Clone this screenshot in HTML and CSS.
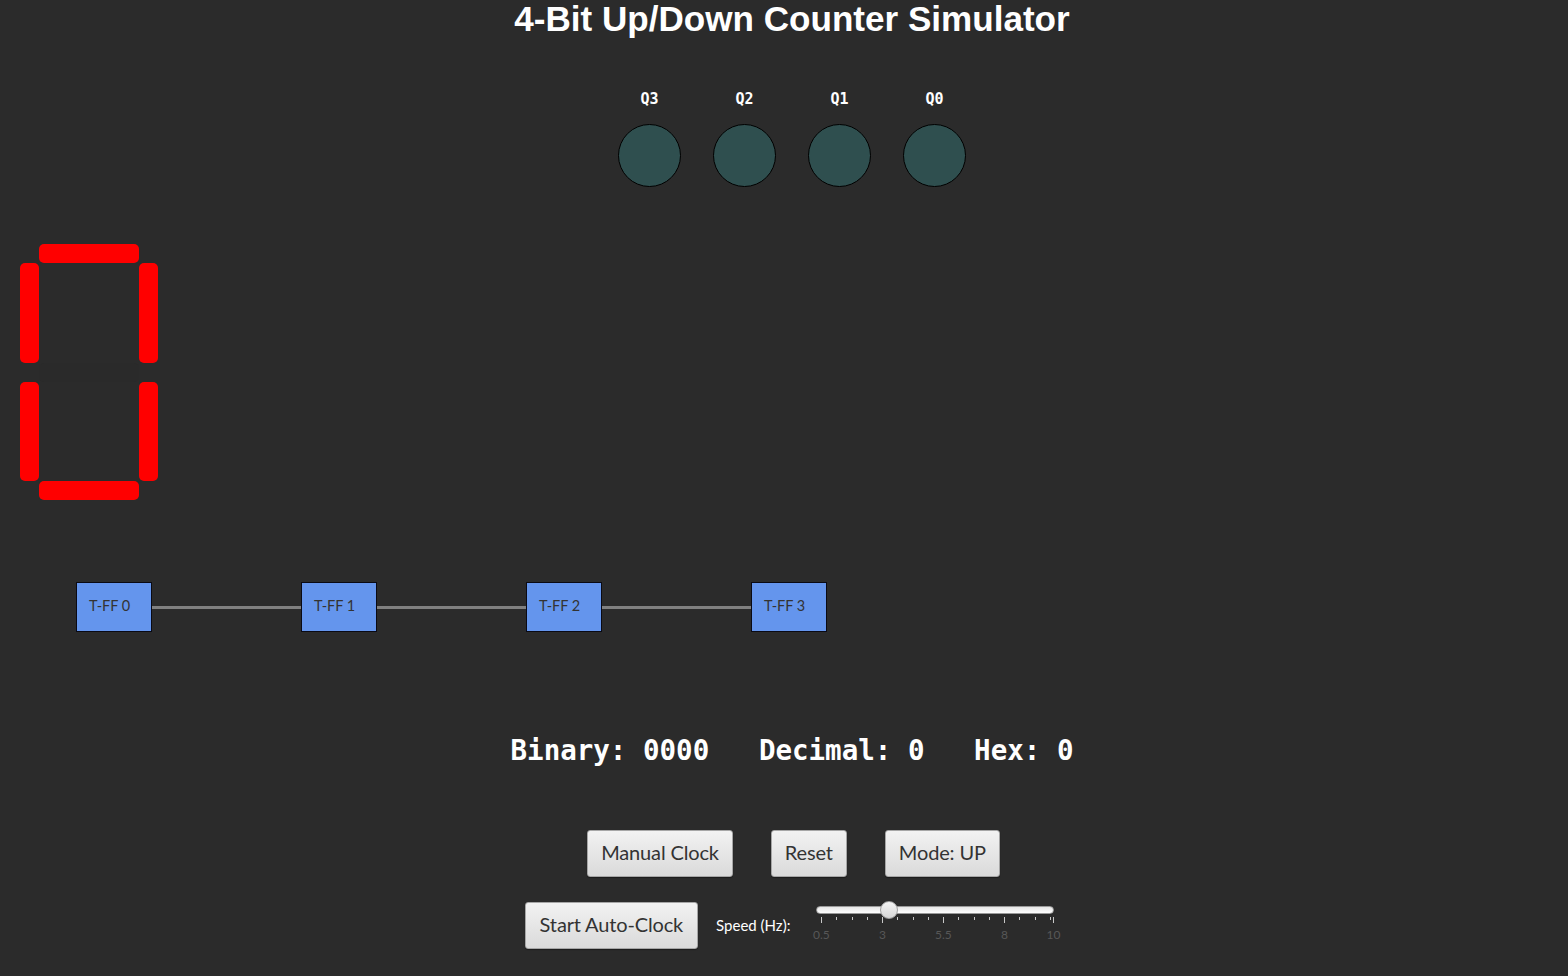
FILE: index.html
```html
<!DOCTYPE html>
<html lang="en">
<head>
<meta charset="utf-8">
<title>4-Bit Up/Down Counter Simulator</title>
<link rel="stylesheet" href="styles.css">
</head>
<body>
<div class="app">
  <h1 class="title center">4-Bit Up/Down Counter Simulator</h1>

  <div class="leds center">
    <div class="led"><span class="led-label">Q3</span><span class="led-bulb"></span></div>
    <div class="led"><span class="led-label">Q2</span><span class="led-bulb"></span></div>
    <div class="led"><span class="led-label">Q1</span><span class="led-bulb"></span></div>
    <div class="led"><span class="led-label">Q0</span><span class="led-bulb"></span></div>
  </div>

  <div class="seg7">
    <span class="seg seg-a on"></span>
    <span class="seg seg-f on"></span>
    <span class="seg seg-b on"></span>
    <span class="seg seg-g"></span>
    <span class="seg seg-e on"></span>
    <span class="seg seg-c on"></span>
    <span class="seg seg-d on"></span>
  </div>

  <div class="chain">
    <div class="tff">T-FF 0</div>
    <div class="wire"></div>
    <div class="tff">T-FF 1</div>
    <div class="wire"></div>
    <div class="tff">T-FF 2</div>
    <div class="wire"></div>
    <div class="tff">T-FF 3</div>
  </div>

  <div class="readout center">Binary: 0000   Decimal: 0   Hex: 0</div>

  <div class="controls center">
    <button class="btn">Manual Clock</button>
    <button class="btn">Reset</button>
    <button class="btn">Mode: UP</button>
  </div>

  <div class="controls2 center">
    <button class="btn btn-wide">Start Auto-Clock</button>
    <span class="speed-label">Speed (Hz):</span>
    <div class="slider">
      <div class="slider-track"><span class="slider-thumb"></span></div>
      <div class="slider-ticks">
        <span class="tick major" style="left:0px"></span>
        <span class="tick" style="left:15px"></span>
        <span class="tick" style="left:31px"></span>
        <span class="tick" style="left:46px"></span>
        <span class="tick major" style="left:61px"></span>
        <span class="tick" style="left:76px"></span>
        <span class="tick" style="left:92px"></span>
        <span class="tick" style="left:107px"></span>
        <span class="tick major" style="left:122px"></span>
        <span class="tick" style="left:137px"></span>
        <span class="tick" style="left:153px"></span>
        <span class="tick" style="left:168px"></span>
        <span class="tick major" style="left:183px"></span>
        <span class="tick" style="left:198px"></span>
        <span class="tick" style="left:214px"></span>
        <span class="tick" style="left:229px"></span>
        <span class="tick major" style="left:232px"></span>
      </div>
      <div class="slider-labels">
        <span class="tick-label" style="left:0px">0.5</span>
        <span class="tick-label" style="left:61px">3</span>
        <span class="tick-label" style="left:122px">5.5</span>
        <span class="tick-label" style="left:183px">8</span>
        <span class="tick-label" style="left:232px">10</span>
      </div>
    </div>
  </div>
</div>
</body>
</html>
```

FILE: styles.css
```css
* {
  box-sizing: border-box;
}

html, body {
  margin: 0;
  padding: 0;
  background: #2b2b2b;
}

body {
  width: 1568px;
  height: 976px;
  overflow: hidden;
  font-family: "Lato", "Open Sans", sans-serif;
}

.app {
  display: flex;
  flex-direction: column;
}

.center {
  padding-left: 16px;
  display: flex;
  justify-content: center;
}

.title {
  margin: 0;
  font-family: "Liberation Sans", Arial, sans-serif;
  font-weight: bold;
  font-size: 35.1px;
  line-height: 38px;
  color: #ffffff;
}

/* LEDs */
.leds {
  margin-top: 52px;
  gap: 32px;
}

.led {
  display: flex;
  flex-direction: column;
  align-items: center;
  width: 63px;
}

.led-label {
  font-family: "DejaVu Sans Mono", monospace;
  font-weight: bold;
  font-size: 15px;
  line-height: 18px;
  color: #ffffff;
}

.led-bulb {
  margin-top: 16px;
  width: 63px;
  height: 63px;
  border-radius: 50%;
  background: #2f4f4f;
  border: 1px solid #000000;
}

/* Seven segment */
.seg7 {
  margin-top: 57px;
  margin-left: 20px;
  display: grid;
  grid-template-columns: 19px 100px 19px;
  grid-template-rows: 19px 100px 19px 99px 19px;
  width: 138px;
}

.seg {
  border-radius: 5px;
  background: #2a2a2a;
}

.seg.on {
  background: #ff0000;
}

.seg-a { grid-column: 2; grid-row: 1; }
.seg-f { grid-column: 1; grid-row: 2; }
.seg-b { grid-column: 3; grid-row: 2; }
.seg-g { grid-column: 2; grid-row: 3; }
.seg-e { grid-column: 1; grid-row: 4; }
.seg-c { grid-column: 3; grid-row: 4; }
.seg-d { grid-column: 2; grid-row: 5; }

/* Flip-flop chain */
.chain {
  margin-top: 82px;
  margin-left: 76px;
  display: flex;
  align-items: center;
}

.tff {
  width: 76px;
  height: 50px;
  background: #6495ed;
  border: 1px solid #0a0a14;
  display: flex;
  align-items: center;
  padding: 0 0 4px 12px;
  font-size: 14.5px;
  color: #333333;
}

.wire {
  width: 149px;
  height: 3px;
  background: #808080;
}

/* Readout */
.readout {
  margin-top: 102px;
  font-family: "DejaVu Sans Mono", monospace;
  font-weight: bold;
  font-size: 27.5px;
  line-height: 32px;
  color: #ffffff;
  white-space: pre;
}

/* Buttons */
.controls {
  margin-top: 64px;
  padding-left: 19px;
  gap: 38px;
}

.controls2 {
  margin-top: 25px;
  padding-left: 20px;
  align-items: flex-start;
}

.btn {
  height: 47px;
  padding: 0 13px 2px;
  font-family: "Lato", "Open Sans", sans-serif;
  font-size: 20px;
  letter-spacing: -0.15px;
  line-height: 27px;
  color: #333333;
  background: linear-gradient(#f2f2f2, #dadada);
  border: 1px solid #a6a6a6;
  border-radius: 3px;
  box-shadow: 0 1px 1px rgba(0, 0, 0, 0.35);
}

.btn-wide {
  padding: 0 14px 2px;
}

.speed-label {
  margin-left: 18px;
  margin-top: 13px;
  font-size: 15px;
  line-height: 20px;
  color: #ffffff;
}

/* Slider */
.slider {
  margin-left: 17px;
  width: 256px;
  display: flex;
  flex-direction: column;
}

.slider-track {
  position: relative;
  margin: 4px 9px 0;
  height: 8px;
  border-radius: 4px;
  background: linear-gradient(#e6e6e6, #ffffff);
  border: 1px solid #9a9a9a;
}

.slider-thumb {
  position: absolute;
  left: 63px;
  top: -6px;
  width: 18px;
  height: 18px;
  border-radius: 50%;
  background: linear-gradient(#f4f4f4, #d6d6d6);
  border: 1px solid #a0a0a0;
}

.slider-ticks {
  position: relative;
  margin: 3px 0 0 14px;
  width: 233px;
  height: 7px;
}

.tick {
  position: absolute;
  top: 0;
  width: 1px;
  height: 3px;
  background: #c8c8c8;
}

.tick.major {
  height: 6px;
}

.slider-labels {
  position: relative;
  margin: 4px 0 0 14px;
  width: 233px;
  height: 14px;
}

.tick-label {
  position: absolute;
  top: 0;
  transform: translateX(-50%);
  font-size: 12px;
  line-height: 14px;
  color: #575757;
}
```
